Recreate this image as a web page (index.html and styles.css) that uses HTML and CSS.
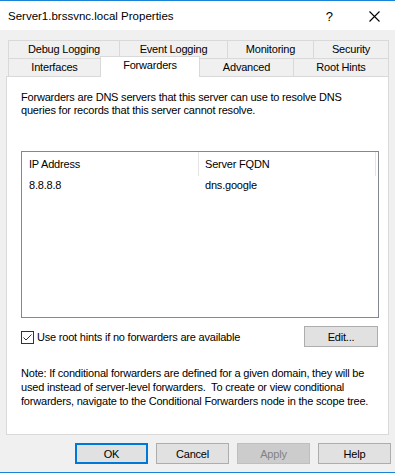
FILE: index.html
```html
<!DOCTYPE html>
<html lang="en">
<head>
    <meta charset="UTF-8">
    <title>Server1.brssvnc.local Properties</title>
    <link rel="stylesheet" href="styles.css">
</head>
<body>
    <div class="window">
        <div class="titlebar">
            <span class="title">Server1.brssvnc.local Properties</span>
            <span class="help-btn">?</span>
            <svg class="close-btn" width="11" height="11" viewBox="0 0 11 11">
                <path d="M0.5 0.5 L10.5 10.5 M10.5 0.5 L0.5 10.5" stroke="#000" stroke-width="1.1" fill="none"/>
            </svg>
        </div>

        <div class="client">
            <div class="tabs">
                <div class="tab-row row-top">
                    <div class="tab">Debug Logging</div>
                    <div class="tab">Event Logging</div>
                    <div class="tab">Monitoring</div>
                    <div class="tab last">Security</div>
                </div>
                <div class="tab-row row-bottom">
                    <div class="tab">Interfaces</div>
                    <div class="tab selected">Forwarders</div>
                    <div class="tab">Advanced</div>
                    <div class="tab last">Root Hints</div>
                </div>
            </div>

            <div class="panel">
                <p class="desc">Forwarders are DNS servers that this server can use to resolve DNS<br>queries for records that this server cannot resolve.</p>

                <div class="listbox">
                    <div class="list-header">
                        <div class="col col-ip">IP Address</div>
                        <div class="col col-fqdn">Server FQDN</div>
                    </div>
                    <div class="list-row">
                        <div class="cell cell-ip">8.8.8.8</div>
                        <div class="cell">dns.google</div>
                    </div>
                </div>

                <div class="option-row">
                    <label class="check">
                        <span class="box">
                            <svg width="11" height="11" viewBox="0 0 11 11">
                                <path d="M1.5 5.5 L4 8 L9.5 2.5" stroke="#333" stroke-width="1" fill="none"/>
                            </svg>
                        </span>
                        Use root hints if no forwarders are available
                    </label>
                    <button class="btn edit">Edit...</button>
                </div>

                <p class="note">Note: If conditional forwarders are defined for a given domain, they will be<br>used instead of server-level forwarders.&nbsp; To create or view conditional<br>forwarders, navigate to the Conditional Forwarders node in the scope tree.</p>
            </div>

            <div class="buttons">
                <button class="btn default">OK</button>
                <button class="btn">Cancel</button>
                <button class="btn disabled">Apply</button>
                <button class="btn">Help</button>
            </div>
        </div>
    </div>
</body>
</html>
```
FILE: styles.css
```css
* {
    box-sizing: border-box;
}
body {
    margin: 0;
    background: #f0f0f0;
    font-family: 'Liberation Sans', Arial, sans-serif;
    font-size: 11px;
    letter-spacing: -0.2px;
    color: #000;
}
.window {
    width: 395px;
    height: 473px;
    border-top: 1px solid #1883d7;
    border-bottom: 1px solid #1883d7;
    display: flex;
    flex-direction: column;
}
.titlebar {
    height: 29px;
    background: #fff;
    display: flex;
    align-items: center;
    padding-left: 8px;
}
.title {
    font-size: 11.5px;
    letter-spacing: 0;
    flex: 1;
    margin-top: 1px;
}
.help-btn {
    font-size: 13px;
    letter-spacing: 0;
    margin-right: 36px;
    margin-top: 1px;
}
.close-btn {
    margin-right: 15px;
    margin-top: 1px;
}
.client {
    flex: 1;
    background: #f0f0f0;
    padding-top: 10px;
}

/* tabs */
.tabs {
    margin-left: 8px;
}
.tab-row {
    display: grid;
    height: 18px;
}
.row-top {
    grid-template-columns: 111px 108px 86px 76px;
}
.row-bottom {
    grid-template-columns: 92px 100px 93px 96px;
}
.tab {
    border-top: 1px solid #d9d9d9;
    border-left: 1px solid #d9d9d9;
    background: #f0f0f0;
    text-align: center;
    line-height: 17px;
    height: 18px;
}
.tab.last {
    border-right: 1px solid #d9d9d9;
}
.tab.selected {
    background: #fff;
    border-right: 1px solid #d9d9d9;
    margin-top: -2px;
    height: 21px;
    line-height: 16px;
    position: relative;
    z-index: 1;
}
.tab.selected + .tab {
    border-left: none;
}

/* page */
.panel {
    margin-left: 6px;
    width: 383px;
    height: 359px;
    background: #fff;
    border: 1px solid #d9d9d9;
    padding: 14px 9px 0 14px;
}
.desc,
.note {
    margin: 0;
    line-height: 13px;
}
.listbox {
    margin-top: 34px;
    height: 167px;
    border: 1px solid #828790;
}
.list-header {
    display: flex;
    height: 24px;
}
.col {
    line-height: 24px;
    border-right: 1px solid #e5e5e5;
}
.col-ip {
    width: 177px;
    padding-left: 7px;
}
.col-fqdn {
    width: 177px;
    padding-left: 6px;
}
.list-row {
    display: flex;
    height: 18px;
    line-height: 18px;
}
.cell {
    padding-left: 6px;
}
.cell-ip {
    width: 177px;
    padding-left: 7px;
}
.option-row {
    margin-top: 8px;
    display: flex;
    align-items: center;
    justify-content: space-between;
}
.check {
    display: flex;
    align-items: center;
    gap: 3px;
    margin-top: 1px;
}
.box {
    width: 13px;
    height: 13px;
    border: 1px solid #333;
    background: #fff;
    display: flex;
}
.note {
    margin-top: 19px;
    line-height: 14px;
}

/* buttons */
.btn {
    width: 73px;
    height: 21px;
    background: #e1e1e1;
    border: 1px solid #adadad;
    font-family: inherit;
    font-size: 11px;
    letter-spacing: -0.2px;
    color: #000;
    padding: 0;
}
.btn.edit {
    width: 74px;
    margin-right: 1px;
}
.btn.default {
    border: 2px solid #0078d7;
}
.btn.disabled {
    background: #cccccc;
    border-color: #bfbfbf;
    color: #838383;
}
.buttons {
    display: flex;
    justify-content: flex-end;
    gap: 8px;
    padding-right: 4px;
    margin-top: 8px;
}
```
